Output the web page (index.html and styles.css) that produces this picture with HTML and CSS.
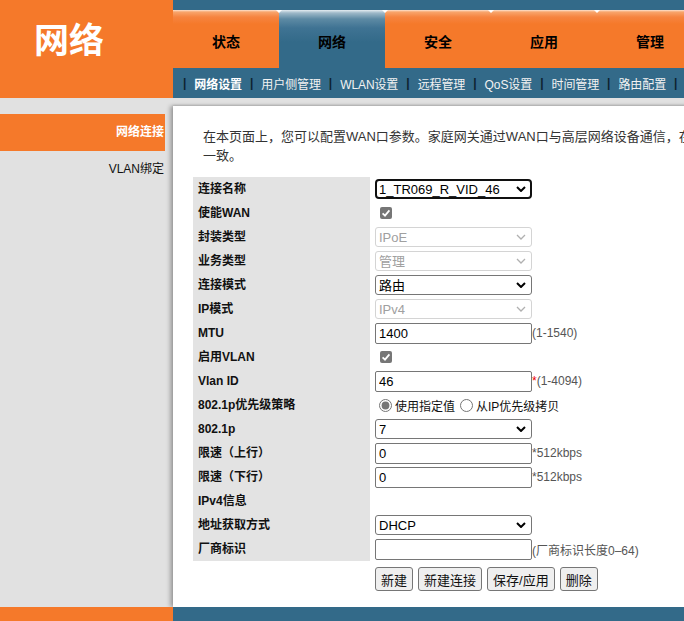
FILE: index.html
```html
<!DOCTYPE html>
<html lang="zh-CN">
<head>
<meta charset="utf-8">
<title>网络</title>
<link rel="stylesheet" href="styles.css">
</head>
<body>
<div class="page">
  <header class="header">
    <div class="logo">网络</div>
    <div class="nav">
      <div class="strip"></div>
      <div class="tabs">
        <div class="tab">状态</div>
        <div class="tab active">网络</div>
        <div class="tab">安全</div>
        <div class="tab">应用</div>
        <div class="tab">管理</div>
        <div class="tab">帮助</div>
      </div>
      <div class="subnav">
        <span class="sep">|</span><span class="sub current">网络设置</span>
        <span class="sep">|</span><span class="sub">用户侧管理</span>
        <span class="sep">|</span><span class="sub">WLAN设置</span>
        <span class="sep">|</span><span class="sub">远程管理</span>
        <span class="sep">|</span><span class="sub">QoS设置</span>
        <span class="sep">|</span><span class="sub">时间管理</span>
        <span class="sep">|</span><span class="sub">路由配置</span>
        <span class="sep">|</span>
      </div>
    </div>
  </header>

  <div class="main">
    <aside class="side">
      <div class="side-item on">网络连接</div>
      <div class="side-item">VLAN绑定</div>
    </aside>
    <section class="content">
      <p class="desc">在本页面上，您可以配置WAN口参数。家庭网关通过WAN口与高层网络设备通信，在通信期间所用的参数必须与高层网络设备保持<br>一致。</p>

      <div class="form">
        <div class="row"><div class="lbl">连接名称</div><div class="val">
          <span class="sel focus"><select><option>1_TR069_R_VID_46</option></select><svg class="chev" viewBox="0 0 10 6"><polyline points="1,1 5,5 9,1"/></svg></span>
        </div></div>
        <div class="row"><div class="lbl">使能WAN</div><div class="val">
          <span class="chk"><svg viewBox="0 0 12 12"><polyline points="2.6,6.3 5,8.6 9.4,3.4"/></svg></span>
        </div></div>
        <div class="row"><div class="lbl">封装类型</div><div class="val">
          <span class="sel dis"><select disabled><option>IPoE</option></select><svg class="chev" viewBox="0 0 10 6"><polyline points="1,1 5,5 9,1"/></svg></span>
        </div></div>
        <div class="row"><div class="lbl">业务类型</div><div class="val">
          <span class="sel dis"><select disabled><option>管理</option></select><svg class="chev" viewBox="0 0 10 6"><polyline points="1,1 5,5 9,1"/></svg></span>
        </div></div>
        <div class="row"><div class="lbl">连接模式</div><div class="val">
          <span class="sel"><select><option>路由</option></select><svg class="chev" viewBox="0 0 10 6"><polyline points="1,1 5,5 9,1"/></svg></span>
        </div></div>
        <div class="row"><div class="lbl">IP模式</div><div class="val">
          <span class="sel dis"><select disabled><option>IPv4</option></select><svg class="chev" viewBox="0 0 10 6"><polyline points="1,1 5,5 9,1"/></svg></span>
        </div></div>
        <div class="row"><div class="lbl">MTU</div><div class="val">
          <input class="txt" type="text" value="1400"><span class="hint">(1-1540)</span>
        </div></div>
        <div class="row"><div class="lbl">启用VLAN</div><div class="val">
          <span class="chk"><svg viewBox="0 0 12 12"><polyline points="2.6,6.3 5,8.6 9.4,3.4"/></svg></span>
        </div></div>
        <div class="row"><div class="lbl">Vlan ID</div><div class="val">
          <input class="txt" type="text" value="46"><span class="star">*</span><span class="hint">(1-4094)</span>
        </div></div>
        <div class="row"><div class="lbl">802.1p优先级策略</div><div class="val radios">
          <label class="rad"><input type="radio" name="p" checked>使用指定值</label>
          <label class="rad"><input type="radio" name="p">从IP优先级拷贝</label>
        </div></div>
        <div class="row"><div class="lbl">802.1p</div><div class="val">
          <span class="sel"><select><option>7</option></select><svg class="chev" viewBox="0 0 10 6"><polyline points="1,1 5,5 9,1"/></svg></span>
        </div></div>
        <div class="row"><div class="lbl">限速（上行）</div><div class="val">
          <input class="txt" type="text" value="0"><span class="hint">*512kbps</span>
        </div></div>
        <div class="row"><div class="lbl">限速（下行）</div><div class="val">
          <input class="txt" type="text" value="0"><span class="hint">*512kbps</span>
        </div></div>
        <div class="row"><div class="lbl">IPv4信息</div><div class="val"></div></div>
        <div class="row"><div class="lbl">地址获取方式</div><div class="val">
          <span class="sel"><select><option>DHCP</option></select><svg class="chev" viewBox="0 0 10 6"><polyline points="1,1 5,5 9,1"/></svg></span>
        </div></div>
        <div class="row"><div class="lbl">厂商标识</div><div class="val">
          <input class="txt" type="text" value=""><span class="hint">(厂商标识长度0–64)</span>
        </div></div>
      </div>

      <div class="buttons">
        <button class="btn">新建</button>
        <button class="btn">新建连接</button>
        <button class="btn">保存/应用</button>
        <button class="btn">删除</button>
      </div>
    </section>
  </div>

  <footer class="footer">
    <div class="foot-left"></div>
    <div class="foot-right"></div>
  </footer>
</div>
</body>
</html>
```

FILE: styles.css
```css
html, body {
  margin: 0;
  padding: 0;
  overflow: hidden;
  background: #e1e1e1;
}

body {
  font-family: "Liberation Sans", "Noto Sans CJK SC", Arial, sans-serif;
  font-size: 12px;
  color: #000;
}

.page {
  width: 960px;
}

/* ---------- header ---------- */
.header {
  display: flex;
  height: 98px;
}

.logo {
  width: 173px;
  flex: none;
  background: #f5792a;
  color: #fff;
  font-size: 35px;
  font-weight: bold;
  padding: 15px 0 0 34px;
  box-sizing: border-box;
  line-height: 46px;
  font-family: "Noto Sans CJK SC", sans-serif;
}

.nav {
  flex: 1;
  background: #336a89;
  display: flex;
  flex-direction: column;
}

.strip {
  height: 10px;
}

.tabs {
  display: flex;
  height: 58px;
}

.tab {
  width: 106px;
  flex: none;
  display: flex;
  align-items: center;
  justify-content: center;
  font-size: 14px;
  font-weight: bold;
  color: #000;
  background: linear-gradient(#fde3d0 0, #f8a56c 2px, #f68440 7px, #f5792a 14px);
  position: relative;
  padding-top: 4px;
  box-sizing: border-box;
}

.tab + .tab::before {
  content: "";
  position: absolute;
  left: -3px;
  top: 0;
  border-left: 3px solid transparent;
  border-right: 3px solid transparent;
  border-top: 3px solid #ffffff;
}

.tab.active {
  background: linear-gradient(#e4ecf1 0, #9db8c8 3px, #5d8aa4 9px, #3f7393 18px, #336a89 32px);
}

.subnav {
  height: 30px;
  display: flex;
  align-items: center;
  padding-left: 10px;
  color: #fff;
  font-size: 12px;
  white-space: nowrap;
}

.sep {
  color: #0d2230;
  font-weight: bold;
  margin: 0 8px 0 0;
}

.sub {
  margin-right: 8px;
  color: #f2f2f2;
  letter-spacing: -0.1px;
}

.sub.current {
  font-weight: bold;
  color: #fff;
}

/* ---------- main ---------- */
.main {
  display: flex;
  height: 509px;
}

.side {
  width: 173px;
  flex: none;
  padding-top: 16px;
  box-sizing: border-box;
}

.side-item {
  width: 165px;
  height: 37px;
  line-height: 37px;
  text-align: right;
  padding-right: 1px;
  box-sizing: border-box;
  font-size: 12px;
  color: #111;
}

.side-item + .side-item {
  height: 38px;
}

.side-item.on {
  background: #f5792a;
  color: #fff;
  font-weight: bold;
}

.content {
  flex: 1;
  background: #fff;
  margin-top: 8px;
  box-shadow: -3px 0 4px rgba(0, 0, 0, 0.28), 0 -1px 2px rgba(0, 0, 0, 0.12);
  padding: 21px 0 0 0;
}

.desc {
  margin: 0 0 12px 30px;
  font-size: 13px;
  line-height: 19px;
  color: #333;
  white-space: nowrap;
}

.form {
  margin-left: 20px;
  display: flex;
  flex-direction: column;
}

.row {
  display: flex;
  height: 24px;
}

.lbl {
  width: 177px;
  flex: none;
  background: #e3e3e3;
  padding-left: 5px;
  box-sizing: border-box;
  font-weight: bold;
  font-size: 12px;
  line-height: 24px;
  color: #111;
}

.val {
  display: flex;
  align-items: center;
  padding-left: 5px;
  font-size: 12px;
}

.sel {
  position: relative;
  display: inline-block;
  width: 157px;
  height: 20px;
}

.sel select {
  appearance: none;
  -webkit-appearance: none;
  width: 100%;
  height: 100%;
  margin: 0;
  border: 1px solid #767676;
  border-radius: 3px;
  background: #fff;
  font-family: "Liberation Sans", "Noto Sans CJK SC", Arial, sans-serif;
  font-size: 13px;
  color: #000;
  padding: 0 0 0 3px;
  box-sizing: border-box;
}

.sel.focus select {
  border: 2px solid #101010;
  border-radius: 4px;
  padding-left: 2px;
}

.sel.dis select {
  border-color: #d4d4d4;
  color: #a0a0a0;
  background: #fff;
  opacity: 1;
}

.chev {
  position: absolute;
  right: 6px;
  top: 7px;
  width: 10px;
  height: 6px;
  pointer-events: none;
  fill: none;
  stroke: #000;
  stroke-width: 2;
}

.sel.dis .chev {
  stroke: #b0b0b0;
  stroke-width: 1.3;
}

.chk {
  width: 12px;
  height: 12px;
  margin-left: 5px;
  border-radius: 2px;
  background: #767676;
  display: inline-flex;
}

.chk svg {
  width: 12px;
  height: 12px;
  fill: none;
  stroke: #fff;
  stroke-width: 1.8;
}

.txt {
  width: 157px;
  height: 21px;
  margin: 0;
  border: 1px solid #767676;
  border-radius: 2px;
  padding: 0 3px;
  box-sizing: border-box;
  font-family: "Liberation Sans", "Noto Sans CJK SC", Arial, sans-serif;
  font-size: 13px;
  color: #000;
}

.hint {
  color: #555;
  font-size: 12px;
}

.star {
  color: #e00;
  font-size: 12px;
}

.radios {
  padding-left: 5px;
}

.rad {
  display: inline-flex;
  align-items: center;
  font-size: 12px;
  color: #111;
  margin-right: 1px;
}

.rad input {
  margin: 0 3px 0 4px;
  width: 13px;
  height: 13px;
  accent-color: #767676;
}

.buttons {
  display: flex;
  gap: 5px;
  margin: 6px 0 0 202px;
}

.btn {
  height: 24px;
  padding: 0 5px;
  border: 1px solid #767676;
  border-radius: 3px;
  background: #efefef;
  font-family: "Liberation Sans", "Noto Sans CJK SC", Arial, sans-serif;
  font-size: 13px;
  color: #111;
}

/* ---------- footer ---------- */
.footer {
  display: flex;
  height: 30px;
}

.foot-left {
  width: 173px;
  background: #f5792a;
}

.foot-right {
  flex: 1;
  background: #336a89;
}
```
